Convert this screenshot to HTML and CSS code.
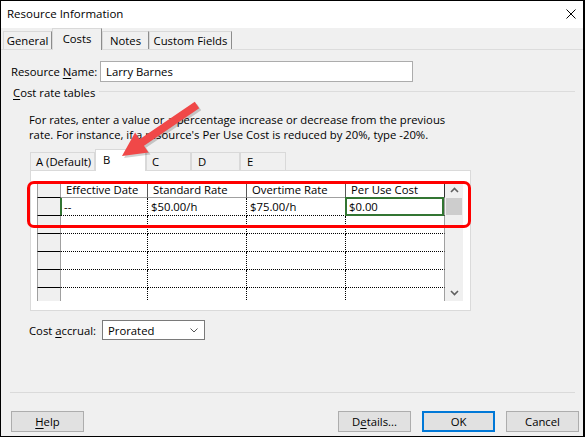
FILE: index.html
```html
<!DOCTYPE html>
<html>
<head>
<meta charset="utf-8">
<title>Resource Information</title>
<link rel="stylesheet" href="styles.css">
</head>
<body>
<div class="window">
  <div class="titlebar">
    <span class="title">Resource Information</span>
    <svg class="close" width="10" height="10" viewBox="0 0 10 10"><path d="M0.5 0.5L9.5 9.5M9.5 0.5L0.5 9.5" stroke="#000" stroke-width="1" fill="none"/></svg>
  </div>
  <div class="tabs">
    <div class="tab t-general">General</div>
    <div class="tab t-costs active">Costs</div>
    <div class="tab t-notes">Notes</div>
    <div class="tab t-custom">Custom Fields</div>
  </div>
  <div class="panel">
    <div class="name-row">
      <span class="name-label">Resource <u>N</u>ame:</span>
      <div class="textbox">Larry Barnes</div>
    </div>
    <div class="group-title">
      <span class="group-label"><u>C</u>ost rate tables</span>
      <div class="rule"></div>
    </div>
    <p class="help-text">For rates, enter a value or a percentage increase or decrease from the previous<br>rate. For instance, if a resource's Per Use Cost is reduced by 20%, type -20%.</p>
    <div class="rate-tabs">
      <div class="rtab r-a">A (Default)</div>
      <div class="rtab r-b active">B</div>
      <div class="rtab r-c">C</div>
      <div class="rtab r-d">D</div>
      <div class="rtab r-e">E</div>
    </div>
    <div class="rate-panel">
      <div class="grid-wrap">
        <div class="grid">
          <div class="rh rh-top"></div>
          <div class="hc">Effective Date</div>
          <div class="hc">Standard Rate</div>
          <div class="hc">Overtime Rate</div>
          <div class="hc hc-last">Per Use Cost</div>

          <div class="rh rh-cur"></div>
          <div class="dc dc-cur">--</div>
          <div class="dc">$50.00/h</div>
          <div class="dc">$75.00/h</div>
          <div class="dc dc-last sel">$0.00</div>

          <div class="rh"></div><div class="dc"></div><div class="dc"></div><div class="dc"></div><div class="dc dc-last"></div>
          <div class="rh"></div><div class="dc"></div><div class="dc"></div><div class="dc"></div><div class="dc dc-last"></div>
          <div class="rh"></div><div class="dc"></div><div class="dc"></div><div class="dc"></div><div class="dc dc-last"></div>
          <div class="rh"></div><div class="dc"></div><div class="dc"></div><div class="dc"></div><div class="dc dc-last"></div>
          <div class="rh"></div><div class="dc"></div><div class="dc"></div><div class="dc"></div><div class="dc dc-last"></div>
        </div>
        <div class="scrollbar">
          <div class="sb-btn"><svg width="9" height="6" viewBox="0 0 9 6"><path d="M1 5L4.5 1.5L8 5" stroke="#606060" stroke-width="1.6" fill="none"/></svg></div>
          <div class="sb-thumb"></div>
          <div class="sb-track"></div>
          <div class="sb-btn"><svg width="9" height="6" viewBox="0 0 9 6"><path d="M1 1L4.5 4.5L8 1" stroke="#606060" stroke-width="1.6" fill="none"/></svg></div>
        </div>
      </div>
    </div>
    <div class="accrual-row">
      <span class="accrual-label">Cost <u>a</u>ccrual:</span>
      <div class="select">
        <span>Prorated</span>
        <svg class="chev" width="8" height="5" viewBox="0 0 8 5"><path d="M0.5 0.5L4 4L7.5 0.5" stroke="#555" stroke-width="1" fill="none"/></svg>
      </div>
    </div>
    <div class="footer">
      <div class="sep"></div>
      <div class="buttons">
        <div class="btn"><u>H</u>elp</div>
        <div class="btn btn-details">D<u>e</u>tails...</div>
        <div class="btn btn-ok">OK</div>
        <div class="btn">Cancel</div>
      </div>
    </div>
  </div>

  <div class="highlight"></div>
  <svg class="arrow" width="585" height="437" viewBox="0 0 585 437">
    <polygon points="124,158 150.5,154.4 146,147.8 201.2,110.3 196.8,103.7 141.6,141.2 137.1,134.6" fill="#000" opacity="0.18"/>
    <polygon points="122,156 148.5,152.4 144,145.8 199.2,108.3 194.8,101.7 139.6,139.2 135.1,132.6" fill="#f04848"/>
  </svg>
</div>
</body>
</html>
```
FILE: styles.css
```css
* { box-sizing: border-box; }
html, body { margin: 0; padding: 0; background: #f0f0f0; }
body {
  font-family: "Open Sans", "Liberation Sans", sans-serif;
  font-size: 11.3px;
  color: #000;
}
u { text-decoration: underline; text-underline-offset: 2px; }

.window {
  position: relative;
  width: 585px;
  height: 437px;
  border: 1px solid #000;
  border-right-width: 2px;
  background: #f0f0f0;
  display: flex;
  flex-direction: column;
  overflow: hidden;
}

.titlebar {
  height: 27px;
  background: #fff;
  display: flex;
  align-items: center;
  padding-left: 6px;
  padding-bottom: 3px;
}
.title { font-size: 11.5px; }
.close { margin-left: auto; margin-right: 7px; margin-top: 1px; }

.tabs {
  height: 22px;
  display: flex;
  align-items: flex-end;
  padding-left: 2px;
  border-bottom: 1px solid #dcdcdc;
}
.tab {
  height: 18px;
  border: 1px solid #d9d9d9;
  border-bottom: none;
  border-right-color: #8c8c8c;
  display: flex;
  align-items: center;
  justify-content: center;
  background: #f0f0f0;
}
.t-general { width: 49px; }
.t-costs { width: 50px; }
.t-notes { width: 47px; }
.t-custom { width: 83px; }
.tab.active {
  height: 22px;
  margin-bottom: -1px;
  position: relative;
  align-items: flex-start;
  padding-top: 2px;
}

.panel {
  flex: 1;
  display: flex;
  flex-direction: column;
  padding: 11px 4px 4px 10px;
}

.name-row { display: flex; align-items: center; height: 21px; }
.name-label { width: 89px; }
.textbox {
  width: 313px;
  height: 21px;
  background: #fff;
  border: 1px solid #acacac;
  padding-left: 5px;
  display: flex;
  align-items: center;
}

.group-title { display: flex; align-items: center; height: 14px; margin-top: 3px; }
.group-label { margin-left: 2px; }
.rule { flex: 1; border-top: 1px solid #dcdcdc; margin-left: 4px; margin-right: 4px; margin-top: -1px; }

.help-text { margin: 13px 0 0 18px; line-height: 15px; }

.rate-tabs {
  margin: 7px 0 0 19px;
  height: 21px;
  display: flex;
  align-items: flex-end;
}
.rtab {
  height: 18px;
  border: 1px solid #d9d9d9;
  border-bottom: none;
  background: #f0f0f0;
  padding-left: 5px;
  display: flex;
  align-items: center;
}
.r-a { width: 65px; }
.r-b { width: 51px; padding-left: 7px; }
.r-c { width: 45px; }
.r-d { width: 49px; padding-left: 6px; }
.r-e { width: 46px; padding-left: 6px; }
.rtab.active {
  height: 22px;
  margin-bottom: -1px;
  background: #fff;
  position: relative;
  align-items: flex-start;
  padding-top: 2px;
}

.rate-panel {
  margin-left: 19px;
  width: 441px;
  height: 141px;
  background: #fff;
  border: 1px solid #dadada;
  padding: 10px 0 0 6px;
}

.grid-wrap { display: flex; height: 120px; width: 426px; overflow: hidden; }
.grid {
  display: grid;
  grid-template-columns: 24px 87px 99px 99px 99px;
  grid-template-rows: 17px repeat(6, 18px);
  height: 120px;
  overflow: hidden;
}
.rh {
  background: #f0f0f0;
  border-left: 1px solid #a0a0a0;
  border-right: 1px solid #a0a0a0;
  border-bottom: 1px solid #000;
}
.rh-cur { border-right: 1px solid #327532; }
.hc {
  border-right: 1px solid #5a5a5a;
  border-bottom: 1px solid #a0a0a0;
  padding-left: 5px;
  display: flex;
  align-items: center;
  white-space: nowrap;
}
.dc {
  border-right: 1px dotted #000;
  border-bottom: 1px dotted #000;
  padding-left: 3px;
  display: flex;
  align-items: center;
  white-space: nowrap;
}
.dc-cur { box-shadow: inset 1px 0 0 #327532; }
.dc-last { border-right: 1px solid #a0a0a0; }
.hc-last { border-right: 1px solid #333; }
.sel { position: relative; }
.sel::after {
  content: "";
  position: absolute;
  left: -1px;
  top: -1px;
  right: 0;
  bottom: -1px;
  border: 2px solid #327532;
}

.scrollbar {
  width: 18px;
  background: #f0f0f0;
  display: flex;
  flex-direction: column;
  align-items: stretch;
}
.sb-btn { height: 17px; display: flex; align-items: center; justify-content: center; }
.sb-thumb { height: 17px; margin: 0 1px; background: #cdcdcd; }
.sb-track { flex: 1; }

.accrual-row { display: flex; align-items: center; margin: 9px 0 0 18px; height: 20px; }
.accrual-label { width: 73px; }
.select {
  width: 103px;
  height: 20px;
  background: #fff;
  border: 1px solid #7a7a7a;
  display: flex;
  align-items: center;
  padding-left: 5px;
}
.chev { margin-left: auto; margin-right: 6px; }

.footer { margin-top: auto; }
.sep { border-top: 1px solid #dadada; margin-left: -1px; margin-right: 4px; }
.buttons { display: flex; gap: 11px; margin-top: 18px; }
.btn {
  width: 73px;
  height: 21px;
  background: #e1e1e1;
  border: 1px solid #adadad;
  display: flex;
  align-items: center;
  justify-content: center;
}
.btn-details { margin-left: auto; }
.btn-ok { border: 2px solid #0078d7; }

.highlight {
  position: absolute;
  left: 26px;
  top: 180px;
  width: 444px;
  height: 47px;
  border: 3px solid #f00;
  border-radius: 7px;
}
.arrow { position: absolute; left: -1px; top: -1px; }
```
